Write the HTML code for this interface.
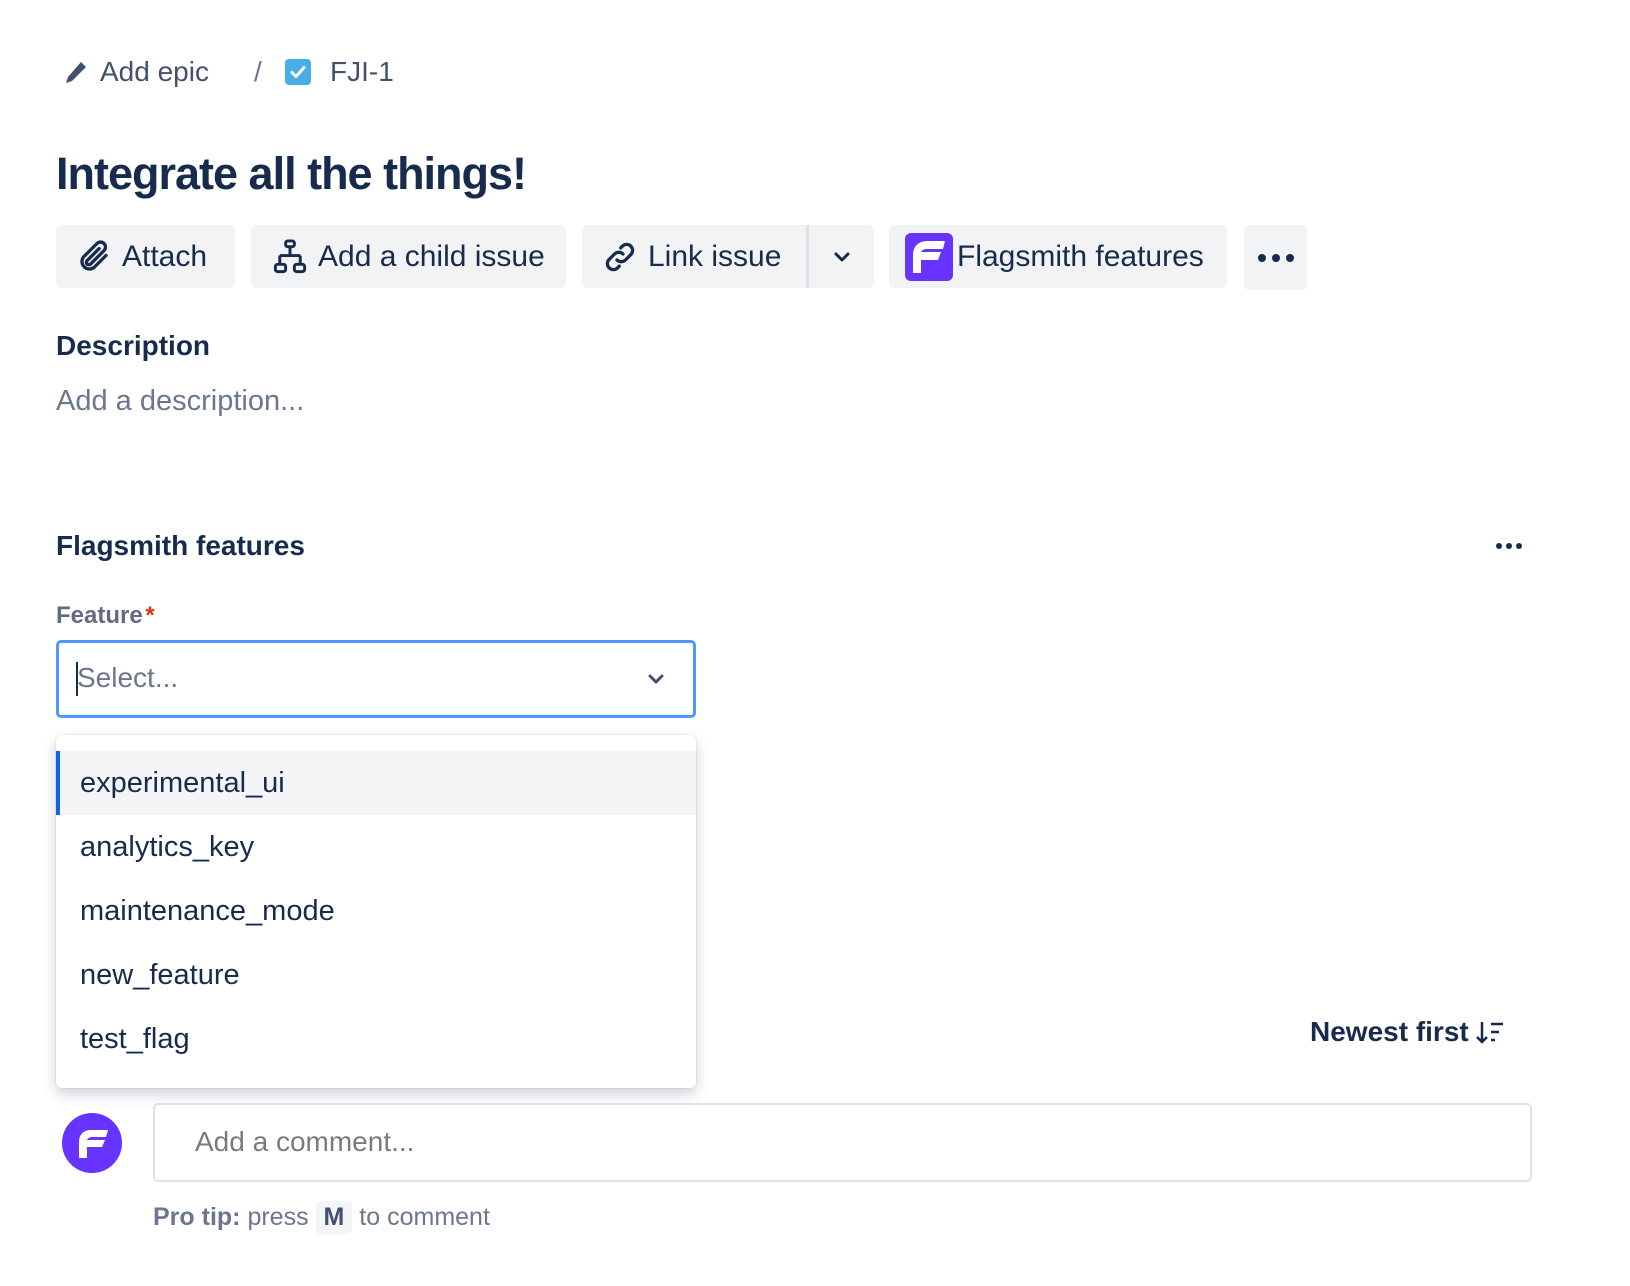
<!DOCTYPE html>
<html><head><meta charset="utf-8"><style>
*{box-sizing:border-box;margin:0;padding:0}
body{width:1630px;height:1286px;background:#fff;font-family:"Liberation Sans",sans-serif;color:#172b4d;position:relative;overflow:hidden}
.a{position:absolute;white-space:nowrap}
.btn{position:absolute;top:225px;height:63px;background:#f2f3f5;border-radius:6px;display:flex;align-items:center;font-size:30px;color:#172b4d}
.item{position:absolute;left:56px;width:640px;height:64px;display:flex;align-items:center;padding-left:24px;font-size:29px;color:#172b4d}
</style></head><body>
<svg class="a" style="left:64px;top:60px" width="24" height="26" viewBox="0 0 24 26"><path d="M17 2l5 5L8 21l-6 2 2-6z" fill="#42526e"/></svg>
<div class="a" style="left:100px;top:56px;font-size:28px;color:#42526e">Add epic</div>
<div class="a" style="left:254px;top:56px;font-size:28px;color:#6b778c">/</div>
<svg class="a" style="left:285px;top:59px" width="26" height="26" viewBox="0 0 26 26"><rect width="26" height="26" rx="4" fill="#4bade8"/><path d="M7 13.5l4 4 8-9" stroke="#fff" stroke-width="3" fill="none" stroke-linecap="round" stroke-linejoin="round"/></svg>
<div class="a" style="left:330px;top:56px;font-size:28px;color:#42526e">FJI-1</div>
<div class="a" style="left:56px;top:148px;font-size:45px;font-weight:bold;letter-spacing:-1px">Integrate all the things!</div>
<div class="btn" style="left:56px;width:179px">
<svg style="margin-left:20px" width="36" height="36" viewBox="0 0 24 24"><path d="M20 11l-8 8a5 5 0 0 1-7-7l9-9a3.3 3.3 0 0 1 4.7 4.7l-9 9a1.6 1.6 0 0 1-2.3-2.3l8-8" stroke="#172b4d" stroke-width="2.2" fill="none" stroke-linecap="round"/></svg>
<span style="margin-left:10px">Attach</span></div>
<div class="btn" style="left:251px;width:315px">
<svg style="margin-left:21px" width="36" height="38" viewBox="0 0 24 26"><rect x="9" y="2" width="6" height="4" rx="1.5" stroke="#172b4d" stroke-width="2" fill="none"/><path d="M12 6v6M5 12h14M5 12v6M19 12v6" stroke="#172b4d" stroke-width="2" fill="none"/><rect x="2" y="18" width="7" height="5" rx="1.5" stroke="#172b4d" stroke-width="2" fill="none"/><rect x="15" y="18" width="7" height="5" rx="1.5" stroke="#172b4d" stroke-width="2" fill="none"/></svg>
<span style="margin-left:10px">Add a child issue</span></div>
<div class="btn" style="left:582px;width:224px;border-radius:6px 0 0 6px">
<svg style="margin-left:20px" width="36" height="36" viewBox="0 0 24 24"><path d="M10 14a4 4 0 0 0 5.6 0l4-4a4 4 0 0 0-5.6-5.6l-1.5 1.5M14 10a4 4 0 0 0-5.6 0l-4 4a4 4 0 0 0 5.6 5.6l1.5-1.5" stroke="#172b4d" stroke-width="2.2" fill="none" stroke-linecap="round"/></svg>
<span style="margin-left:10px">Link issue</span></div>
<div class="a" style="left:806px;top:225px;width:3px;height:63px;background:#dfe1e6"></div>
<div class="btn" style="left:809px;width:65px;border-radius:0 6px 6px 0;justify-content:center">
<svg width="18" height="12" viewBox="0 0 18 12"><path d="M3 3l6 6 6-6" stroke="#172b4d" stroke-width="3" fill="none" stroke-linecap="round" stroke-linejoin="round"/></svg></div>
<div class="btn" style="left:889px;width:338px">
<svg style="margin-left:16px" width="48" height="48" viewBox="0 0 48 48"><rect width="48" height="48" rx="6" fill="#6633ff"/><path d="M40 8H22C13 8 8 14 8 22v18h8v-13h17l3-8H16c1-2 3-3 6-3h16z" fill="#fff"/></svg>
<span style="margin-left:4px">Flagsmith features</span></div>
<div class="btn" style="left:1244px;width:63px;height:65px;justify-content:center">
<svg width="38" height="10" viewBox="0 0 38 10"><circle cx="5" cy="5" r="4" fill="#172b4d"/><circle cx="19" cy="5" r="4" fill="#172b4d"/><circle cx="33" cy="5" r="4" fill="#172b4d"/></svg></div>
<div class="a" style="left:56px;top:330px;font-size:28px;font-weight:bold">Description</div>
<div class="a" style="left:56px;top:385px;font-size:29px;color:#6b778c">Add a description...</div>
<div class="a" style="left:56px;top:530px;font-size:28px;font-weight:bold">Flagsmith features</div>
<svg class="a" style="left:1495px;top:541px" width="28" height="10" viewBox="0 0 28 10"><circle cx="4" cy="5" r="3" fill="#172b4d"/><circle cx="14" cy="5" r="3" fill="#172b4d"/><circle cx="24" cy="5" r="3" fill="#172b4d"/></svg>
<div class="a" style="left:56px;top:602px;font-size:24px;font-weight:bold;color:#5e6c84">Feature <span style="color:#de350b;margin-left:-4px">*</span></div>
<div class="a" style="left:56px;top:640px;width:640px;height:78px;border:3px solid #4c9aff;border-radius:5px"></div>
<div class="a" style="left:76px;top:662px;width:2px;height:34px;background:#172b4d"></div>
<div class="a" style="left:77px;top:662px;font-size:28px;color:#6b778c">Select...</div>
<svg class="a" style="left:647px;top:673px" width="18" height="12" viewBox="0 0 18 12"><path d="M3 3l6 6 6-6" stroke="#42526e" stroke-width="3" fill="none" stroke-linecap="round" stroke-linejoin="round"/></svg>
<div class="a" style="left:56px;top:735px;width:640px;height:353px;background:#fff;border-radius:6px;box-shadow:0 0 1px rgba(9,30,66,.31),0 6px 14px rgba(9,30,66,.2)"></div>
<div class="item" style="top:751px;background:#f4f5f7;border-left:4px solid #0c66e4;padding-left:20px">experimental_ui</div>
<div class="item" style="top:815px">analytics_key</div>
<div class="item" style="top:879px">maintenance_mode</div>
<div class="item" style="top:943px">new_feature</div>
<div class="item" style="top:1007px">test_flag</div>
<div class="a" style="left:1310px;top:1016px;font-size:28px;font-weight:bold;color:#172b4d">Newest first</div>
<svg class="a" style="left:1476px;top:1019px" width="30" height="28" viewBox="0 0 30 28"><path d="M6 3v20M1 18l5 5 5-5" stroke="#172b4d" stroke-width="2.5" fill="none"/><path d="M15 5h12M15 13h8M15 21h4" stroke="#172b4d" stroke-width="2.5"/></svg>
<svg class="a" style="left:62px;top:1113px" width="60" height="60" viewBox="0 0 60 60"><circle cx="30" cy="30" r="30" fill="#6633ff"/><path d="M46 17H29c-8 0-12 5-12 12v16h8V34h15l3-7H25c1-2 3-3 5-3h14z" fill="#fff"/></svg>
<div class="a" style="left:153px;top:1103px;width:1379px;height:79px;border:2px solid #dfe1e6;border-radius:5px"></div>
<div class="a" style="left:195px;top:1126px;font-size:28px;color:#7a7a7a">Add a comment...</div>
<div class="a" style="left:153px;top:1201px;font-size:25px;color:#6b778c"><b>Pro tip:</b> press <span style="display:inline-block;background:#f4f5f7;border-radius:4px;padding:2px 8px;font-weight:bold;color:#42526e">M</span> to comment</div>
</body></html>
